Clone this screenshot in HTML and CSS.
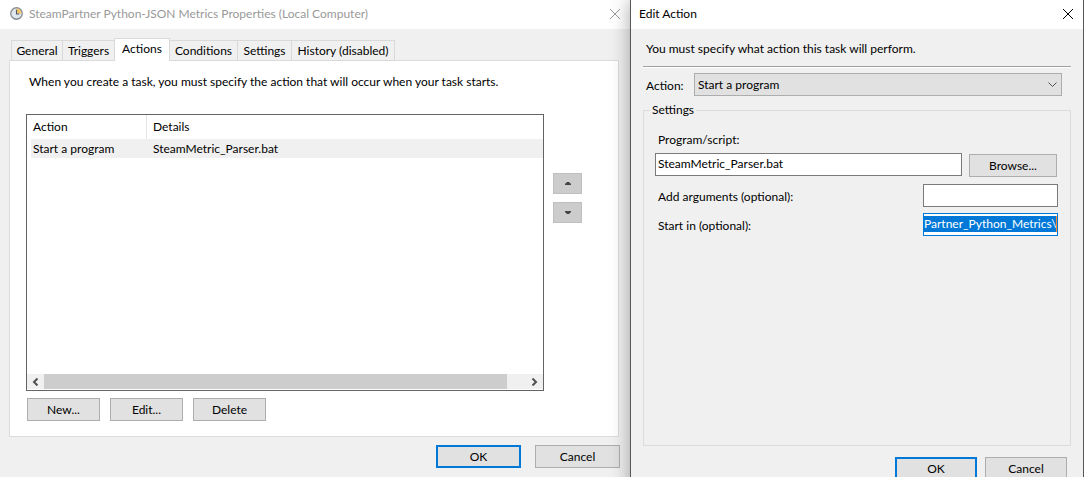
FILE: index.html
```html
<!DOCTYPE html>
<html lang="en">
<head>
<meta charset="utf-8">
<title>Task properties</title>
<link rel="stylesheet" href="styles.css">
</head>
<body>
<main class="desktop">
  <section class="window properties">
    <header class="titlebar inactive">
      <svg class="clock" viewBox="0 0 14 14" aria-hidden="true">
        <circle cx="7" cy="7" r="6.2" fill="#dfe8ee" stroke="#858b8f" stroke-width="1.4"/>
        <path d="M7 7V1.6A5.4 5.4 0 0 1 12.4 7Z" fill="#f3c468"/>
        <path d="M7 3V7.5H10" fill="none" stroke="#4e5a66" stroke-width="1.2"/>
      </svg>
      <h1 class="title">SteamPartner Python-JSON Metrics Properties (Local Computer)</h1>
      <button class="close" aria-label="Close"><svg viewBox="0 0 10 10"><path d="M0 0L10 10M10 0L0 10"/></svg></button>
    </header>
    <div class="properties-body">
      <nav class="tabs" role="tablist">
        <button class="tab general" role="tab">General</button>
        <button class="tab triggers" role="tab">Triggers</button>
        <button class="tab active" role="tab" aria-selected="true">Actions</button>
        <button class="tab conditions" role="tab">Conditions</button>
        <button class="tab settings" role="tab">Settings</button>
        <button class="tab history" role="tab">History (disabled)</button>
      </nav>
      <div class="panel" role="tabpanel">
        <p class="intro">When you create a task, you must specify the action that will occur when your task starts.</p>
        <div class="list-row">
          <div class="list">
            <table class="actions">
              <thead><tr><th class="col-action">Action</th><th>Details</th></tr></thead>
              <tbody><tr><td>Start a program</td><td>SteamMetric_Parser.bat</td></tr></tbody>
            </table>
            <div class="scrollbar">
              <button class="scroll-arrow" aria-label="Scroll left"><svg viewBox="0 0 7 8"><path d="M5.5 .5L2 4L5.5 7.5"/></svg></button>
              <div class="track"><div class="thumb"></div></div>
              <button class="scroll-arrow" aria-label="Scroll right"><svg viewBox="0 0 7 8"><path d="M1.5 .5L5 4L1.5 7.5"/></svg></button>
            </div>
          </div>
          <div class="movers">
            <button class="mover" aria-label="Move up"><svg viewBox="0 0 6 3"><path d="M0 3V2L2 0H4L6 2V3Z"/></svg></button>
            <button class="mover" aria-label="Move down"><svg viewBox="0 0 6 3"><path d="M0 0V1L2 3H4L6 1V0Z"/></svg></button>
          </div>
        </div>
        <div class="list-buttons">
          <button class="btn">New...</button>
          <button class="btn">Edit...</button>
          <button class="btn">Delete</button>
        </div>
      </div>
      <footer class="footer">
        <button class="btn default">OK</button>
        <button class="btn">Cancel</button>
      </footer>
    </div>
  </section>

  <section class="window edit">
    <header class="titlebar">
      <h2 class="title">Edit Action</h2>
      <button class="close" aria-label="Close"><svg viewBox="0 0 10 10"><path d="M0 0L10 10M10 0L0 10"/></svg></button>
    </header>
    <div class="edit-body">
      <p class="hint">You must specify what action this task will perform.</p>
      <hr class="rule">
      <div class="action-row">
        <label for="action">Action:</label>
        <div class="select-wrap">
          <select id="action" class="select"><option>Start a program</option></select>
          <svg class="chevron" viewBox="0 0 9 6" aria-hidden="true"><path d="M.5 .5L4.5 4.5L8.5 .5"/></svg>
        </div>
      </div>
      <fieldset class="group">
        <legend>Settings</legend>
        <label class="program-label" for="program">Program/script:</label>
        <div class="program-row">
          <input id="program" class="field" type="text" value="SteamMetric_Parser.bat">
          <button class="btn browse">Browse...</button>
        </div>
        <div class="option-row">
          <label for="arguments">Add arguments (optional):</label>
          <input id="arguments" class="field short" type="text">
        </div>
        <div class="option-row">
          <label for="start-in">Start in (optional):</label>
          <div class="field short focused"><input id="start-in" class="selected" type="text" value="Partner_Python_Metrics\"></div>
        </div>
      </fieldset>
      <footer class="footer">
        <button class="btn default">OK</button>
        <button class="btn">Cancel</button>
      </footer>
    </div>
  </section>
</main>
</body>
</html>
```
FILE: styles.css
```css
* { box-sizing: border-box; }

body {
  margin: 0;
  overflow: hidden;
  background: #f0f0f0;
  color: #000;
  font: 12px/16px Lato, "Open Sans", sans-serif;
}

h1, h2, p { margin: 0; font-size: 12px; font-weight: 400; }
button, input, select { font: inherit; color: inherit; margin: 0; }
svg { display: block; }

.desktop {
  display: grid;
  grid-template-columns: 630fr 454fr;
  height: 100vh;
}

.window { display: flex; flex-direction: column; min-width: 0; background: #f0f0f0; }
.properties { height: 100vh; }
.edit {
  position: relative;
  height: calc(100vh + 15px);
  border: solid #55585b;
  border-width: 0 1px;
  box-shadow: 0 0 18px rgba(0, 0, 0, .35);
}

.titlebar {
  display: flex;
  align-items: center;
  height: 29px;
  padding: 0 9px 2px 8px;
  background: #fff;
}
.titlebar.inactive { padding-left: 10px; color: #999; }
.title { flex: 1; white-space: nowrap; }
.clock { width: 13px; height: 13px; margin-right: 6px; }
.close { width: 12px; height: 12px; padding: 1px; border: 0; background: none; }
.close svg { width: 10px; height: 10px; fill: none; stroke: currentColor; stroke-width: 1; }

.properties-body {
  display: flex;
  flex: 1;
  flex-direction: column;
  min-height: 0;
  padding: 9px 11px 9px 9px;
}

.tabs {
  position: relative;
  z-index: 1;
  display: flex;
  align-items: flex-end;
  height: 23px;
  margin-bottom: -1px;
  padding-left: 2px;
}
.tab {
  height: 21px;
  margin-left: -1px;
  padding: 0;
  border: 1px solid #d9d9d9;
  background: #f0f0f0;
  white-space: nowrap;
}
.general { width: 52px; margin-left: 0; }
.triggers { width: 53px; }
.tab.active { width: 56px; height: 23px; padding-bottom: 2px; border-bottom: 0; background: #fff; }
.conditions { width: 69px; }
.settings { width: 55px; }
.history { width: 104px; }

.panel {
  display: flex;
  flex: 1;
  flex-direction: column;
  min-height: 0;
  padding: 13px 16px 15px 16px;
  border: 1px solid #dcdcdc;
  background: #fff;
}
.intro { padding-left: 3px; white-space: nowrap; }
.list-row { display: flex; flex: 1; gap: 9px; min-height: 0; margin-top: 24px; padding-right: 20px; }
.list { display: flex; flex: 1; flex-direction: column; min-width: 0; padding-bottom: 1px; border: 1px solid #646464; }
.actions { width: calc(100% - 4px); margin: 0 0 auto 4px; border-spacing: 0; table-layout: fixed; }
.actions th, .actions td { padding: 0 0 0 2px; text-align: left; font-weight: 400; }
.actions th { height: 24px; }
.actions td { height: 19px; background: #f0f0f0; }
.actions th:last-child, .actions td:last-child { padding-left: 6px; }
.actions .col-action { width: 116px; border-right: 1px solid #e5e5e5; }

.scrollbar { display: flex; height: 15px; background: #f0f0f0; }
.scroll-arrow { display: grid; place-items: center; width: 17px; padding: 0; border: 0; background: none; }
.scroll-arrow svg { width: 7px; height: 8px; fill: none; stroke: #505050; stroke-width: 2; }
.track { flex: 1; }
.thumb { width: 96%; height: 15px; background: #cdcdcd; }

.movers { display: flex; flex-direction: column; gap: 8px; padding-top: 59px; }
.mover { display: grid; place-items: center; width: 29px; height: 21px; padding: 0; border: 1px solid #bfbfbf; background: #ccc; }
.mover svg { width: 6px; height: 3px; fill: #444; }

.list-buttons { display: flex; gap: 10px; padding: 7px 0 0 1px; }
.btn { width: 73px; height: 23px; padding: 0; border: 1px solid #adadad; background: #e1e1e1; }
.btn.default { border: 2px solid #0078d7; }

.footer { display: flex; justify-content: flex-end; }
.properties .footer { gap: 14px; margin: 8px -1px 0 0; }
.properties .footer .btn { width: 85px; }

.edit-body { display: flex; flex: 1; flex-direction: column; min-height: 0; padding: 12px; }
.hint { padding-left: 3px; white-space: nowrap; }
.rule { width: 100%; height: 2px; margin: 9px 0 5px; border: 0; border-top: 1px solid #a0a0a0; background: #fff; }
.action-row { display: flex; align-items: center; padding: 0 9px 0 3px; }
.action-row label { width: 48px; padding-top: 2px; }
.select-wrap { position: relative; flex: 1; }
.select {
  display: block;
  width: 100%;
  height: 23px;
  padding: 0 20px 0 3px;
  border: 1px solid #adadad;
  border-radius: 0;
  background: #e1e1e1;
  appearance: none;
}
.chevron { position: absolute; top: 9px; right: 5px; width: 9px; height: 6px; fill: none; stroke: #505050; stroke-width: 1; pointer-events: none; }

.group {
  flex: 1;
  min-width: 0;
  min-height: 0;
  margin: 6px 0 0;
  padding: 14px 12px 0 11px;
  border: 1px solid #dcdcdc;
}
.group legend { margin-left: -5px; padding: 0 2px; }
.program-label { display: block; padding-left: 3px; }
.program-row { display: flex; gap: 7px; align-items: flex-end; height: 24px; margin-top: 5px; padding-right: 1px; }
.program-row .field { flex: 1; min-width: 0; align-self: flex-start; }
.browse { width: 88px; }
.field { height: 23px; padding: 0 2px 2px; border: 1px solid #7a7a7a; border-radius: 0; background: #fff; }
.field.short { width: 135px; }
.option-row { display: flex; align-items: center; justify-content: space-between; margin-top: 7px; padding-left: 3px; }
.option-row + .option-row { margin-top: 6px; }
.option-row label { padding-top: 2px; }
.field.focused { padding: 2px 0; border-color: #0078d7; }
.selected {
  display: block;
  width: 100%;
  height: 16px;
  padding: 0;
  border: 0;
  border-right: 1px solid #ff8728;
  background: #0078d7;
  color: #fff;
}

.edit .footer { gap: 8px; margin-top: 11px; padding-right: 4px; }
.edit .footer .btn { width: 82px; }
```
